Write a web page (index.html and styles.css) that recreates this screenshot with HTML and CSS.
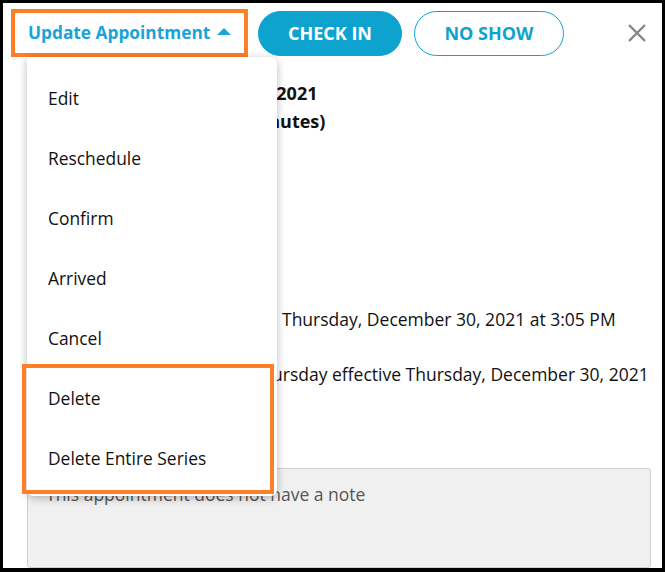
FILE: index.html
```html
<!DOCTYPE html>
<html lang="en">
<head>
<meta charset="utf-8">
<title>Appointment</title>
<link rel="stylesheet" href="styles.css">
</head>
<body>
<div class="frame">
  <header class="toolbar">
    <div class="trigger-wrap">
      <button class="trigger">Update Appointment <span class="caret"></span></button>
      <div class="menu">
        <div class="menu-item">Edit</div>
        <div class="menu-item">Reschedule</div>
        <div class="menu-item">Confirm</div>
        <div class="menu-item">Arrived</div>
        <div class="menu-item">Cancel</div>
        <div class="menu-item">Delete</div>
        <div class="menu-item">Delete Entire Series</div>
        <div class="highlight"></div>
      </div>
    </div>
    <button class="btn btn-fill">CHECK IN</button>
    <button class="btn btn-outline">NO SHOW</button>
    <button class="close" aria-label="Close">
      <svg width="20" height="20" viewBox="0 0 20 20"><path d="M2 2 L18 18 M18 2 L2 18" stroke="#858585" stroke-width="2.4" fill="none"/></svg>
    </button>
  </header>
  <main class="content">
    <h2 class="title">Thursday, December 30, 2021<br>3:05 PM - 3:35 PM (30 minutes)</h2>
    <div class="details">
      <div class="row"><span class="label">Booked on</span><span class="value">Thursday, December 30, 2021 at 3:05 PM</span></div>
      <div class="row"><span class="label">Repeats weekly on Th</span><span class="value">ursday effective Thursday, December 30, 2021</span></div>
    </div>
    <div class="note">This appointment does not have a note</div>
  </main>
</div>
</body>
</html>
```
FILE: styles.css
```css
html, body {
  margin: 0;
  padding: 0;
  background: #000;
}
body {
  font-family: "Open Sans", "Noto Sans", sans-serif;
  color: #111;
}
.frame {
  box-sizing: border-box;
  width: 665px;
  height: 572px;
  border-style: solid;
  border-color: #000;
  border-width: 3px 3px 4px 3px;
  background: #fff;
  position: relative;
  overflow: hidden;
}
.toolbar {
  display: flex;
  align-items: center;
  padding: 6px 0 0 8px;
  height: 48px;
  position: relative;
  z-index: 2;
}
.trigger-wrap {
  position: relative;
}
.trigger {
  box-sizing: border-box;
  width: 237px;
  height: 48px;
  border: 4px solid #fd7f2a;
  background: #fff;
  font-family: inherit;
  font-weight: 700;
  font-size: 17.3px;
  color: #19a3d9;
  text-align: left;
  padding: 0 0 2px 13px;
  display: flex;
  align-items: center;
  gap: 7px;
  cursor: pointer;
}
.caret {
  display: inline-block;
  width: 0;
  height: 0;
  border-left: 7px solid transparent;
  border-right: 7px solid transparent;
  border-bottom: 7px solid #19a3d9;
  margin-top: -2px;
}
.btn {
  box-sizing: border-box;
  height: 45px;
  border-radius: 23px;
  font-family: inherit;
  font-weight: 700;
  font-size: 18px;
  cursor: pointer;
  padding: 0;
}
.btn-fill {
  width: 144px;
  margin-left: 10px;
  background: #0ea3cf;
  border: 1px solid #0ea3cf;
  color: #fff;
}
.btn-outline {
  width: 150px;
  margin-left: 12px;
  background: #fff;
  border: 1px solid #0ea3cf;
  color: #0ea3cf;
}
.close {
  margin-left: 63px;
  background: none;
  border: 0;
  padding: 0;
  width: 20px;
  height: 20px;
  display: flex;
}
.menu {
  position: absolute;
  top: 48px;
  left: 16px;
  width: 250px;
  box-sizing: border-box;
  padding: 11px 0 8px;
  background: #fff;
  border-radius: 0 6px 6px 6px;
  box-shadow: 0 2px 8px rgba(0, 0, 0, 0.28);
}
.menu-item {
  height: 60px;
  line-height: 60px;
  padding-left: 21px;
  font-size: 17.4px;
  color: #111;
}
.highlight {
  position: absolute;
  left: -5px;
  top: 307px;
  width: 252px;
  height: 130px;
  box-sizing: border-box;
  border: 4px solid #fd7f2a;
}
.content {
  padding: 22px 11px 0 24px;
}
.title {
  margin: 0 0 0 29px;
  font-size: 18px;
  font-weight: 700;
  line-height: 28px;
}
.details {
  margin-top: 156px;
}
.row {
  display: flex;
  height: 55px;
  align-items: center;
  font-size: 17.5px;
  white-space: nowrap;
}
.label {
  width: 255px;
  flex: none;
}
.row:nth-child(2) .label {
  width: 245px;
}
.note {
  margin-top: 67px;
  box-sizing: border-box;
  width: 624px;
  height: 100px;
  background: #f0f0f0;
  border: 1px solid #cfcfcf;
  border-radius: 3px;
  padding: 13px 18px;
  font-size: 17.5px;
  color: #555;
}
```
